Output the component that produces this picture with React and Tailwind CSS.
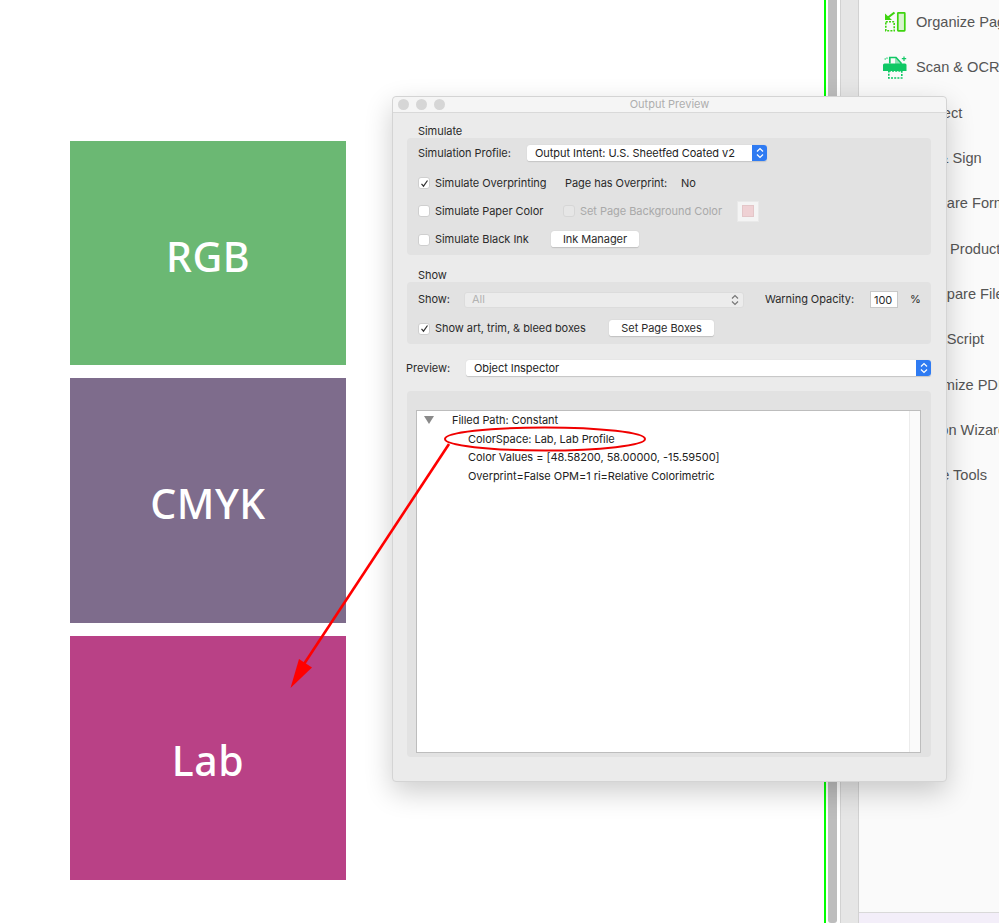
import React from 'react';

const SIDE_ITEMS = [
  'Organize Pages',
  'Scan & OCR',
  'Protect',
  'Fill & Sign',
  'Prepare Form',
  'Print Production',
  'Compare Files',
  'JavaScript',
  'Optimize PDF',
  'Action Wizard',
  'More Tools',
];

const OrganizeIcon = () => (
  <svg width="24" height="24" viewBox="0 0 24 24" fill="none" className="block">
    <rect x="14.8" y="1.8" width="7" height="18" fill="#d9f3cf" stroke="#3ed40f" strokeWidth="1.7" rx="0.5" />
    <rect x="2.8" y="10.8" width="8.4" height="9" stroke="#3ed40f" strokeWidth="1.6" strokeDasharray="2 1.2" />
    <path d="M11.5 1.5 5 6.5" stroke="#3ed40f" strokeWidth="2.2" />
    <path d="M2 2.5v6.5h7z" fill="#3ed40f" />
  </svg>
);

const ScanIcon = () => (
  <svg width="24" height="24" viewBox="0 0 24 24" fill="none" className="block">
    <path d="M6.8 7.5V1.5H13l5 5.500v1" stroke="#10c865" strokeWidth="1.7" />
    <path d="M12 1.5 18 8h-6z" fill="#10c865" fillOpacity="0.45" />
    <path d="M0 9a1.5 1.5 0 0 1 1.5-1.5H22A1.5 1.5 0 0 1 23.5 9v6H0z" fill="#10c865" />
    <rect x="5.8" y="15" width="13" height="7" stroke="#10c865" strokeWidth="1.6" strokeDasharray="2 1.2" />
    <path d="M21 0.5v4.5M18.8 2.7h4.4" stroke="#10c865" strokeWidth="1.2" />
    <path d="M1.5 3h1.5M4 1.5v1.3" stroke="#10c865" strokeWidth="1.2" />
  </svg>
);

const Swatch = ({ color, height, label, textClass }) => (
  <div className={`w-[276px] flex justify-center text-white font-medium text-[41px] tracking-[0.5px] leading-none ${color} ${height} ${textClass}`}>
    {label}
  </div>
);

const Check = ({ checked, disabled }) => (
  <span className={`shrink-0 w-[12px] h-[12px] rounded-[3px] flex items-center justify-center border ${disabled ? 'bg-[#e6e6e6] border-[#d6d6d6]' : 'bg-white border-[#cfcfcf]'}`}>
    {checked && (
      <svg width="9" height="9" viewBox="0 0 9 9" fill="none">
        <path d="M1.5 4.8 3.5 7.2 7.5 1.5" stroke="#333" strokeWidth="1.2" />
      </svg>
    )}
  </span>
);

const Chevrons = ({ color }) => (
  <svg width="8" height="12" viewBox="0 0 8 12" fill="none">
    <path d="M1 4.5 4 1.5l3 3M1 7.5l3 3 3-3" stroke={color} strokeWidth="1.2" />
  </svg>
);

const Button = ({ width, children }) => (
  <button className={`h-[17px] bg-white rounded-[3px] border-b border-[#c4c4c4] shadow-[0_0_1px_#b8b8b8] text-center leading-[16px] ${width}`}>
    {children}
  </button>
);

const BlueSelect = ({ width, label }) => (
  <div className={`h-[17px] flex bg-white rounded-[3px] border-b border-[#c8c8c8] shadow-[0_0_1px_#c4c4c4] ${width}`}>
    <span className="flex-1 pl-[8px] leading-[16px] text-[#222]">{label}</span>
    <span className="w-[15px] rounded-r-[3px] bg-[#2f7bf2] flex items-center justify-center">
      <Chevrons color="#fff" />
    </span>
  </div>
);

const OutputPreview = () => (
  <div className="absolute left-[392px] top-[96px] w-[555px] h-[686px] bg-[#ebebeb] rounded-[4px] border border-[#d4d4d4] shadow-[0_10px_28px_rgba(0,0,0,0.2)] text-[11px] tracking-[-0.05px] text-[#2a2a2a] font-['Inter',sans-serif] flex flex-col">
    {/* Title bar */}
    <div className="relative h-[16px] shrink-0 bg-[#f5f5f5] border-b border-[#d9d9d9] rounded-t-[4px] flex items-center pl-[5px] gap-[7px]">
      <span className="w-[11px] h-[11px] rounded-full bg-[#d6d6d6]" />
      <span className="w-[11px] h-[11px] rounded-full bg-[#d6d6d6]" />
      <span className="w-[11px] h-[11px] rounded-full bg-[#d6d6d6]" />
      <span className="absolute inset-0 text-center leading-[15px] text-[#aeaeae] text-[11px] tracking-normal">Output Preview</span>
    </div>

    <div className="pl-[14px] pr-[15px] flex-1 flex flex-col">
      <div className="pl-[11px] h-[25px] pt-[11px] leading-[14px]">Simulate</div>
      <div className="h-[117px] bg-[#e2e2e2] rounded-[4px] pl-[11px] pt-[7px] flex flex-col">
        <div className="flex items-center h-[17px]">
          <span className="w-[109px]">Simulation Profile:</span>
          <BlueSelect width="w-[240px]" label="Output Intent: U.S. Sheetfed Coated v2" />
        </div>
        <div className="flex items-center h-[14px] mt-[14px]">
          <Check checked />
          <span className="ml-[5px] w-[130px]">Simulate Overprinting</span>
          <span className="w-[116px]">Page has Overprint:</span>
          <span>No</span>
        </div>
        <div className="flex items-center h-[22px] mt-[10px]">
          <Check />
          <span className="ml-[5px] w-[128px]">Simulate Paper Color</span>
          <Check disabled />
          <span className="ml-[5px] w-[157px] text-[#a9a9a9]">Set Page Background Color</span>
          <span className="w-[22px] h-[21px] bg-[#f4f4f4] border border-[#e9e9e9] flex items-center justify-center">
            <span className="w-[12px] h-[12px] bg-[#efd1d4] border border-[#e3c6c8]" />
          </span>
        </div>
        <div className="flex items-center h-[17px] mt-[9px]">
          <Check />
          <span className="ml-[5px] w-[116px]">Simulate Black Ink</span>
          <Button width="w-[88px]">Ink Manager</Button>
        </div>
      </div>

      <div className="pl-[11px] h-[27px] pt-[13px] leading-[14px]">Show</div>
      <div className="h-[62px] bg-[#e2e2e2] rounded-[4px] pl-[11px] pt-[9px] flex flex-col">
        <div className="flex items-center h-[17px]">
          <span className="w-[46px]">Show:</span>
          <div className="w-[280px] h-[16px] bg-[#ececec] rounded-[3px] border border-[#dcdcdc] flex items-center justify-between pl-[7px] pr-[4px] text-[#b2b2b2]">
            All
            <Chevrons color="#777" />
          </div>
          <span className="ml-[21px] w-[105px]">Warning Opacity:</span>
          <span className="w-[28px] h-[17px] bg-white border border-[#c9c9c9] leading-[16px] pl-[3px]">100</span>
          <span className="ml-[12px]">%</span>
        </div>
        <div className="flex items-center h-[17px] mt-[12px]">
          <Check checked />
          <span className="ml-[5px] w-[174px]">Show art, trim, & bleed boxes</span>
          <Button width="w-[105px]">Set Page Boxes</Button>
        </div>
      </div>

      <div className="flex items-center h-[17px] mt-[16px] -ml-px">
        <span className="w-[60px]">Preview:</span>
        <BlueSelect width="w-[466px]" label="Object Inspector" />
      </div>

      <div className="mt-[14px] h-[366px] bg-[#e2e2e2] rounded-[4px] pl-[9px] pr-[10px] pt-[19px] pb-[4px]">
        <div className="h-full bg-white border border-[#bdbdbd] flex">
          <div className="flex-1 relative pl-[35px] leading-[18.5px] text-[#222]">
            <svg width="10" height="8" viewBox="0 0 10 8" className="absolute left-[7px] top-[5px]">
              <path d="M0 0h10L5 8z" fill="#8a8a8a" />
            </svg>
            <div>Filled Path: Constant</div>
            <div className="pl-[16px]">ColorSpace: Lab, Lab Profile</div>
            <div className="pl-[16px]">Color Values = [48.58200, 58.00000, -15.59500]</div>
            <div className="pl-[16px]">Overprint=False OPM=1 ri=Relative Colorimetric</div>
          </div>
          <div className="w-[11px] bg-[#fafafa] border-l border-[#ececec]" />
        </div>
      </div>
    </div>
  </div>
);

export default function App() {
  return (
    <div className="relative w-[999px] h-[923px] overflow-hidden bg-white flex">
      {/* Colour swatches */}
      <div className="w-[824px] shrink-0 pl-[70px] pt-[141px] flex flex-col gap-[13px] font-['Noto_Sans',sans-serif]">
        <Swatch color="bg-[#6bb873]" height="h-[224px]" label="RGB" textClass="pt-[95px]" />
        <Swatch color="bg-[#7e6c8c]" height="h-[245px]" label="CMYK" textClass="pt-[105px]" />
        <Swatch color="bg-[#b94186]" height="h-[244px]" label="Lab" textClass="pt-[104px]" />
      </div>

      {/* Window edge behind the dialog */}
      <div className="w-[2px] shrink-0 bg-[#00ff00]" />
      <div className="w-[2px] shrink-0" />
      <div className="w-[9px] shrink-0 bg-[#bdbdbd] rounded-b-[3px]" />
      <div className="w-[3px] shrink-0" />
      <div className="w-[19px] shrink-0 bg-[#e6e6e6] border-l border-r border-[#d2d2d2]" />

      {/* Tools sidebar */}
      <div className="flex-1 bg-[#fafafa] flex flex-col font-['Liberation_Sans',sans-serif] text-[14.6px] text-[#555]">
        <div className="flex-1 pt-[11px] pl-[24px]">
          {SIDE_ITEMS.map((item, i) => (
            <div key={item} className="h-[45.35px] flex whitespace-nowrap">
              <span className="w-[33px] shrink-0">
                {i === 0 && <OrganizeIcon />}
                {i === 1 && <ScanIcon />}
              </span>
              <span className="leading-[22px]">{item}</span>
            </div>
          ))}
        </div>
        <div className="h-[11px] bg-[#f3eef9] border-t border-[#d9d9d9]" />
      </div>

      <OutputPreview />

      {/* Red annotation */}
      <svg width="999" height="923" viewBox="0 0 999 923" fill="none" className="absolute inset-0 pointer-events-none">
        <ellipse cx="545" cy="439" rx="100" ry="11.5" stroke="#f00000" strokeWidth="2" />
        <path d="M449 444 304 664" stroke="#ff0000" strokeWidth="2.6" />
        <path d="M290.5 688 299 659 312 667.5z" fill="#ff0000" />
      </svg>
    </div>
  );
}
